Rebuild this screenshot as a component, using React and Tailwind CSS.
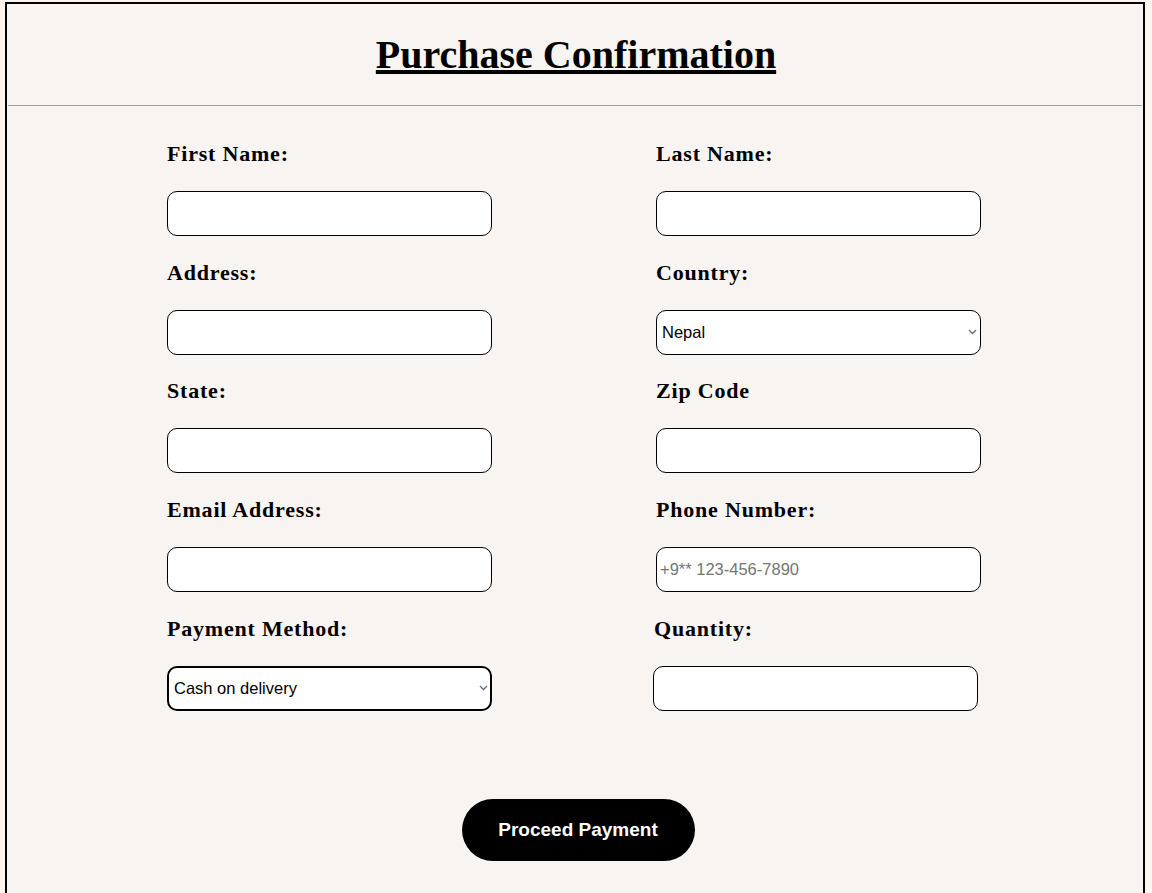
import { useState } from 'react'

const serif = { fontFamily: '"Liberation Serif", "Times New Roman", serif' }

function Field({ label, children, shift }) {
  return (
    <div className={shift ? 'ml-[-2px]' : ''}>
      <label
        className="block text-[22px] leading-[25px] font-bold tracking-[0.8px] text-black"
        style={serif}
      >
        {label}
      </label>
      <div className="mt-[25px]">{children}</div>
    </div>
  )
}

const inputCls =
  'block w-[325px] h-[45px] rounded-[10px] border border-black bg-white px-[3px] text-[16.5px] text-black outline-none placeholder:text-[#757575]'

function Select({ value, options, thick }) {
  const [v, setV] = useState(value)
  return (
    <div className="relative w-[325px]">
      <select
        value={v}
        onChange={(e) => setV(e.target.value)}
        className={`block w-[325px] h-[45px] appearance-none rounded-[10px] bg-white pl-[5px] text-[16.5px] text-black outline-none ${
          thick ? 'border-2 border-black' : 'border border-black'
        }`}
      >
        {options.map((o) => (
          <option key={o}>{o}</option>
        ))}
      </select>
      <svg
        className="pointer-events-none absolute right-[4px] top-[19px]"
        width="9"
        height="6"
        viewBox="0 0 9 6"
      >
        <path d="M1 1 L4.5 4.5 L8 1" fill="none" stroke="#6b6b6b" strokeWidth="1.3" />
      </svg>
    </div>
  )
}

export default function App() {
  return (
    <div
      className="min-h-[893px] bg-[#fff5ee] pt-[2px] pl-[5px]"
      style={{ fontFamily: '"Liberation Sans", Arial, sans-serif' }}
    >
      <div className="w-[1140px] min-h-[891px] border-2 border-b-0 border-black bg-[#f8f4f1]">
        <div className="flex h-[101px] items-center justify-center">
          <h1 className="text-[40px] font-bold underline leading-none translate-x-[1px]" style={serif}>
            Purchase Confirmation
          </h1>
        </div>
        <div className="mx-[1px] h-px bg-[#9c9c9c]" />

        <form className="pt-[35px]" onSubmit={(e) => e.preventDefault()}>
          <div className="mx-auto grid w-[814px] grid-cols-[325px_325px] gap-x-[164px] gap-y-[23.7px] translate-x-[-1px]">
            <Field label="First Name:">
              <input className={inputCls} />
            </Field>
            <Field label="Last Name:">
              <input className={inputCls} />
            </Field>
            <Field label="Address:">
              <input className={inputCls} />
            </Field>
            <Field label="Country:">
              <Select value="Nepal" options={['Nepal', 'India', 'China', 'Bangladesh', 'Bhutan']} />
            </Field>
            <Field label="State:">
              <input className={inputCls} />
            </Field>
            <Field label="Zip Code">
              <input className={inputCls} />
            </Field>
            <Field label="Email Address:">
              <input type="email" className={inputCls} />
            </Field>
            <Field label="Phone Number:">
              <input type="tel" placeholder="+9** 123-456-7890" className={inputCls} />
            </Field>
            <Field label="Payment Method:">
              <Select
                value="Cash on delivery"
                options={['Cash on delivery', 'eSewa', 'Khalti', 'Credit Card']}
                thick
              />
            </Field>
            <Field label="Quantity:" shift>
              <input type="number" className={`${inputCls} ml-[-1px]`} />
            </Field>
          </div>

          <div className="flex justify-center pt-[88px] pb-[32px]">
            <button
              type="submit"
              className="h-[62px] w-[233px] rounded-full bg-black text-[19px] font-bold text-white translate-x-[3px]"
            >
              Proceed Payment
            </button>
          </div>
        </form>
      </div>
    </div>
  )
}
